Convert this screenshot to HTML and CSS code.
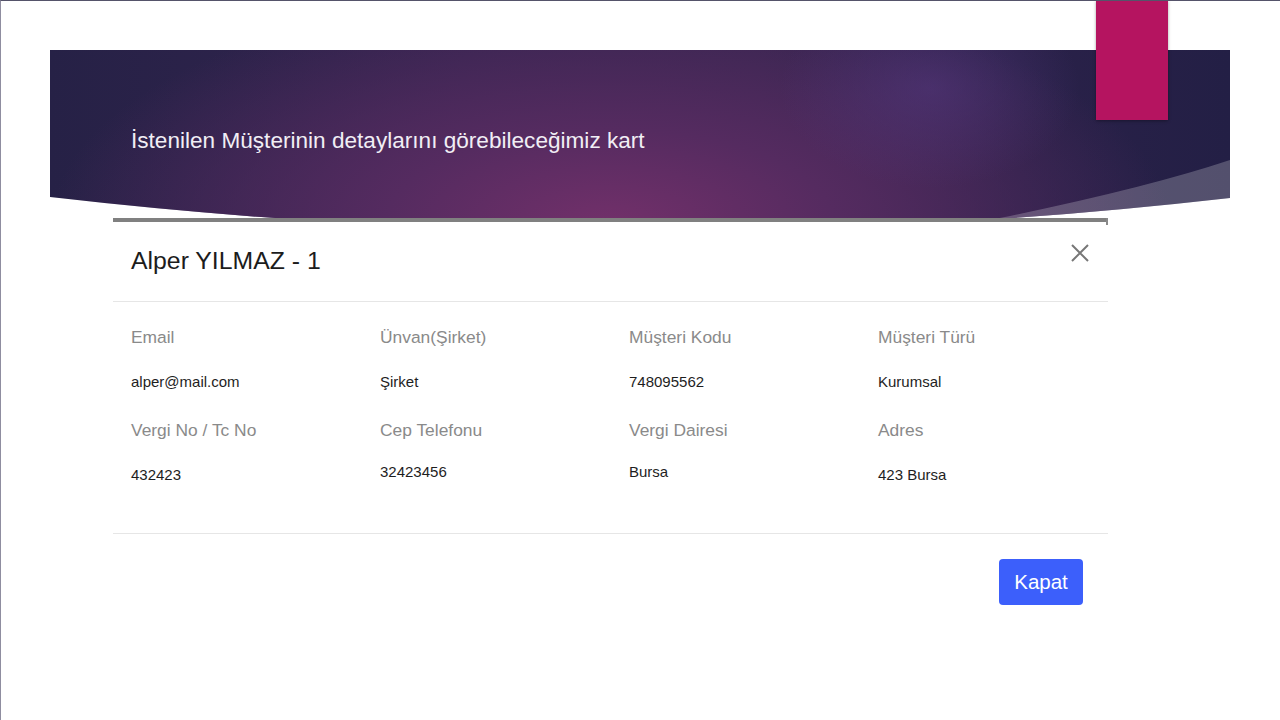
FILE: index.html
```html
<!DOCTYPE html>
<html lang="tr">
<head>
<meta charset="utf-8">
<title>Müşteri Detay Kartı</title>
<link rel="stylesheet" href="styles.css">
</head>
<body>
<div class="slide">
  <div class="accent"></div>
  <div class="banner">
    <svg class="wave" viewBox="0 0 1180 168" preserveAspectRatio="none" aria-hidden="true">
      <path d="M1180 110 Q1090 140 930 172 L1180 172 Z" fill="rgba(255,255,255,0.22)"/>
    </svg>
    <h1 class="banner-title">İstenilen Müşterinin detaylarını görebileceğimiz kart</h1>
  </div>
  <div class="modal">
    <div class="modal-header">
      <h2 class="modal-title">Alper YILMAZ - 1</h2>
      <button class="close" aria-label="Kapat">
        <svg viewBox="0 0 18 18" width="18" height="18"><path d="M1 1 L17 17 M17 1 L1 17" stroke="#777" stroke-width="2" fill="none"/></svg>
      </button>
    </div>
    <div class="modal-body">
      <div class="grid">
        <div class="cell"><div class="label">Email</div><div class="value">alper@mail.com</div></div>
        <div class="cell"><div class="label">Ünvan(Şirket)</div><div class="value">Şirket</div></div>
        <div class="cell"><div class="label">Müşteri Kodu</div><div class="value">748095562</div></div>
        <div class="cell"><div class="label">Müşteri Türü</div><div class="value">Kurumsal</div></div>
        <div class="cell"><div class="label">Vergi No / Tc No</div><div class="value">432423</div></div>
        <div class="cell"><div class="label">Cep Telefonu</div><div class="value up">32423456</div></div>
        <div class="cell"><div class="label">Vergi Dairesi</div><div class="value up">Bursa</div></div>
        <div class="cell"><div class="label">Adres</div><div class="value">423 Bursa</div></div>
      </div>
    </div>
    <div class="modal-footer">
      <button class="btn">Kapat</button>
    </div>
  </div>
</div>
</body>
</html>
```
FILE: styles.css
```css
* { box-sizing: border-box; }
html, body { margin: 0; padding: 0; background: #fff; }
body { font-family: "Liberation Sans", Arial, sans-serif; }

.slide {
  position: relative;
  width: 1280px;
  height: 720px;
  overflow: hidden;
  border-top: 1px solid #55536a;
  border-left: 1px solid #8f8da0;
  padding: 49px 50px 0 49px;
  background: #fff;
}

.accent {
  position: absolute;
  left: 1095px;
  top: -1px;
  width: 72px;
  height: 120px;
  background: #b51460;
  box-shadow: 0 1px 3px rgba(0,0,0,0.35);
  z-index: 3;
}

.banner {
  position: relative;
  height: 168px;
  padding: 77px 0 0 81px;
  clip-path: path("M0 0 L1180 0 L1180 148 Q590 215 0 147 Z");
  background:
    radial-gradient(ellipse 150px 100px at 880px 38px, rgba(86,56,128,0.55), rgba(86,56,128,0) 100%),
    radial-gradient(ellipse 560px 240px at 560px 175px, #72306a 0%, #552b60 40%, rgba(48,35,80,0) 100%),
    linear-gradient(90deg, #262146 0%, #33244f 35%, #35254f 60%, #2a2149 82%, #231f45 100%);
}

.wave {
  position: absolute;
  left: 0;
  top: 0;
  width: 1180px;
  height: 168px;
}

.banner-title {
  position: relative;
  margin: 0;
  font-family: "Liberation Sans", Arial, sans-serif;
  font-weight: normal;
  font-size: 22.6px;
  line-height: 28px;
  color: #f1eef5;
}

.modal {
  position: relative;
  margin-left: 63px;
  width: 995px;
  background: #fff;
  border-top: 4px solid #808080;
}
.modal::after {
  content: "";
  position: absolute;
  right: 0;
  top: -4px;
  width: 2px;
  height: 7px;
  background: #8a8a8a;
}

.modal-header {
  display: flex;
  justify-content: space-between;
  align-items: center;
  height: 80px;
  padding: 0 19px 0 18px;
  border-bottom: 1px solid #e6e6e6;
}
.modal-title {
  margin: 0;
  font-weight: normal;
  font-size: 24.8px;
  line-height: 1;
  color: #1c1c1c;
}
.close {
  align-self: flex-start;
  margin-top: 22px;
  padding: 0;
  border: 0;
  background: none;
  width: 18px;
  height: 18px;
  display: block;
}
.close svg { display: block; }

.modal-body {
  padding: 23px 18px 48px;
}
.grid {
  display: grid;
  grid-template-columns: repeat(4, 249px);
  row-gap: 26px;
}
.label {
  font-size: 17.4px;
  line-height: 24px;
  color: #8a8a8a;
  margin-bottom: 23px;
}
.value {
  font-size: 15px;
  line-height: 20px;
  color: #1e1e1e;
}
.value.up { margin-top: -3px; margin-bottom: 3px; }

.modal-footer {
  display: flex;
  justify-content: flex-end;
  padding: 25px 25px 27px;
  border-top: 1px solid #e6e6e6;
}
.btn {
  width: 84px;
  height: 46px;
  border: 0;
  border-radius: 4px;
  background: #3c5ffb;
  color: #fff;
  font-family: "Liberation Sans", Arial, sans-serif;
  font-size: 20.5px;
  padding: 0;
}
```
